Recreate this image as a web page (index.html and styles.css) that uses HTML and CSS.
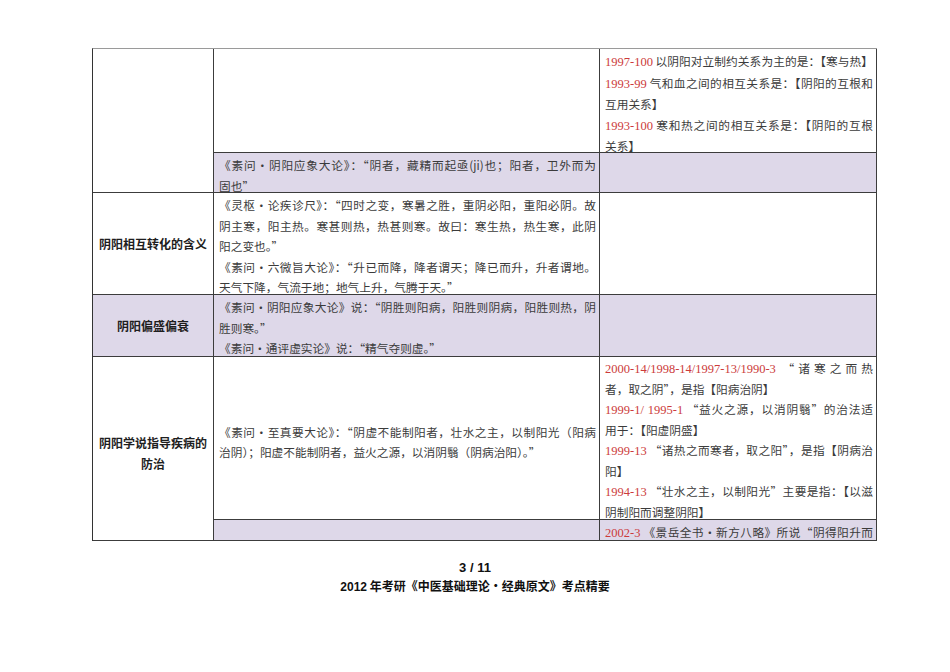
FILE: index.html
```html
<!DOCTYPE html>
<html lang="zh-CN">
<head>
<meta charset="utf-8">
<title>考点精要 3/11</title>
<link rel="stylesheet" href="styles.css">
</head>
<body>
<div class="page">
  <div class="sheet">
    <div class="cell c1 rA"></div>
    <div class="cell c2 rA1"></div>
    <div class="cell c3 rA1">
      <div class="ln j"><span class="yr">1997-100</span> 以阴阳对立制约关系为主的是：【寒与热】</div>
      <div class="ln j"><span class="yr">1993-99</span> 气和血之间的相互关系是：【阴阳的互根和</div>
      <div class="ln">互用关系】</div>
      <div class="ln j"><span class="yr">1993-100</span> 寒和热之间的相互关系是：【阴阳的互根</div>
      <div class="ln">关系】</div>
    </div>
    <div class="cell c2 rA2 tint">
      <div class="ln j">《素问·阴阳应象大论》：“阴者，藏精而起亟(ji)也；阳者，卫外而为</div>
      <div class="ln">固也”</div>
    </div>
    <div class="cell c3 rA2 tint"></div>

    <div class="cell c1 rB label">阴阳相互转化的含义</div>
    <div class="cell c2 rB">
      <div class="ln j">《灵枢·论疾诊尺》：“四时之变，寒暑之胜，重阴必阳，重阳必阴。故</div>
      <div class="ln j">阴主寒，阳主热。寒甚则热，热甚则寒。故曰：寒生热，热生寒，此阴</div>
      <div class="ln">阳之变也。”</div>
      <div class="ln j">《素问·六微旨大论》：“升已而降，降者谓天；降已而升，升者谓地。</div>
      <div class="ln">天气下降，气流于地；地气上升，气腾于天。”</div>
    </div>
    <div class="cell c3 rB"></div>

    <div class="cell c1 rC label tint">阴阳偏盛偏衰</div>
    <div class="cell c2 rC tint">
      <div class="ln j">《素问·阴阳应象大论》说：“阴胜则阳病，阳胜则阴病，阳胜则热，阴</div>
      <div class="ln">胜则寒。”</div>
      <div class="ln">《素问·通评虚实论》说：“精气夺则虚。”</div>
    </div>
    <div class="cell c3 rC tint"></div>

    <div class="cell c1 rD label">阴阳学说指导疾病的<br>防治</div>
    <div class="cell c2 rD1 mid">
      <div class="ln j">《素问·至真要大论》：“阴虚不能制阳者，壮水之主，以制阳光（阳病</div>
      <div class="ln">治阴）；阳虚不能制阴者，益火之源，以消阴翳（阴病治阳）。”</div>
    </div>
    <div class="cell c3 rD1 tight">
      <div class="ln j"><span class="yr">2000-14/1998-14/1997-13/1990-3</span> “诸寒之而热</div>
      <div class="ln">者，取之阴”，是指【阳病治阴】</div>
      <div class="ln j"><span class="yr">1999-1/ 1995-1</span> “益火之源，以消阴翳”的治法适</div>
      <div class="ln">用于：【阳虚阴盛】</div>
      <div class="ln j"><span class="yr">1999-13</span> “诸热之而寒者，取之阳”，是指【阴病治</div>
      <div class="ln">阳】</div>
      <div class="ln j"><span class="yr">1994-13</span> “壮水之主，以制阳光”主要是指：【以滋</div>
      <div class="ln">阴制阳而调整阴阳】</div>
    </div>
    <div class="cell c2 rD2 tint"></div>
    <div class="cell c3 rD2 tint clip">
      <div class="ln j"><span class="yr">2002-3</span> 《景岳全书·新方八略》所说“阴得阳升而</div>
    </div>
  </div>

  <div class="footer">
    <div class="pno">3 / 11</div>
    <div class="ftitle"><span class="lat">2012</span> 年考研《中医基础理论·经典原文》考点精要</div>
  </div>
</div>
</body>
</html>
```

FILE: styles.css
```css
html, body {
  margin: 0;
  padding: 0;
  background: #ffffff;
}

.page {
  width: 950px;
  height: 672px;
  padding-top: 48px;
  box-sizing: border-box;
  font-family: "Noto Sans CJK SC", "Liberation Serif", serif;
  color: #3b3b3b;
}

.sheet {
  margin-left: 92px;
  width: 785px;
  box-sizing: border-box;
  display: grid;
  grid-template-columns: 121px 386px 277px;
  grid-template-rows: 104px 40px 102px 62px 163px 21px;
  border-top: 1px solid #9a9a9a;
  border-left: 1px solid #333333;
}

.cell {
  box-sizing: border-box;
  border-right: 1px solid #3c3c3c;
  border-bottom: 1px solid #3c3c3c;
  padding: 2px 3px 0 5px;
  font-size: 11.7px;
  line-height: 20.5px;
  background: #ffffff;
  min-width: 0;
}

.c1 { grid-column: 1; }
.c2 { grid-column: 2; }
.c3 { grid-column: 3; }

.rA  { grid-row: 1 / 3; }
.rA1 { grid-row: 1; }
.rA2 { grid-row: 2; }
.rB  { grid-row: 3; }
.rC  { grid-row: 4; }
.rD  { grid-row: 5 / 7; }
.rD1 { grid-row: 5; }
.rD2 { grid-row: 6; }

.tint {
  background: #ded8e9;
}

.tight {
  line-height: 20px;
  padding-top: 1px;
}

.label {
  display: flex;
  align-items: center;
  justify-content: center;
  text-align: center;
  padding: 0 4px;
  font-family: "Noto Sans CJK SC", "Liberation Sans", sans-serif;
  font-weight: 700;
  font-size: 12px;
  line-height: 21px;
  color: #1e1e1e;
}

.rD.label {
  padding-top: 8px;
}

.mid {
  display: flex;
  flex-direction: column;
  justify-content: center;
  padding-top: 8px;
}

.clip {
  overflow: hidden;
}

.ln {
  text-align: left;
}

.ln.j {
  text-align: justify;
  text-align-last: justify;
}

.yr {
  font-family: "Liberation Serif", serif;
  font-size: 12.5px;
  color: #cc3b3b;
}

.footer {
  margin-top: 18px;
  text-align: center;
  font-weight: 700;
  color: #111111;
}

.pno {
  font-family: "Liberation Sans", sans-serif;
  font-size: 13px;
  line-height: 18px;
}

.ftitle {
  font-size: 12px;
  line-height: 18px;
  font-family: "Noto Sans CJK SC", "Liberation Sans", sans-serif;
}

.lat {
  font-family: "Liberation Sans", sans-serif;
}
```
